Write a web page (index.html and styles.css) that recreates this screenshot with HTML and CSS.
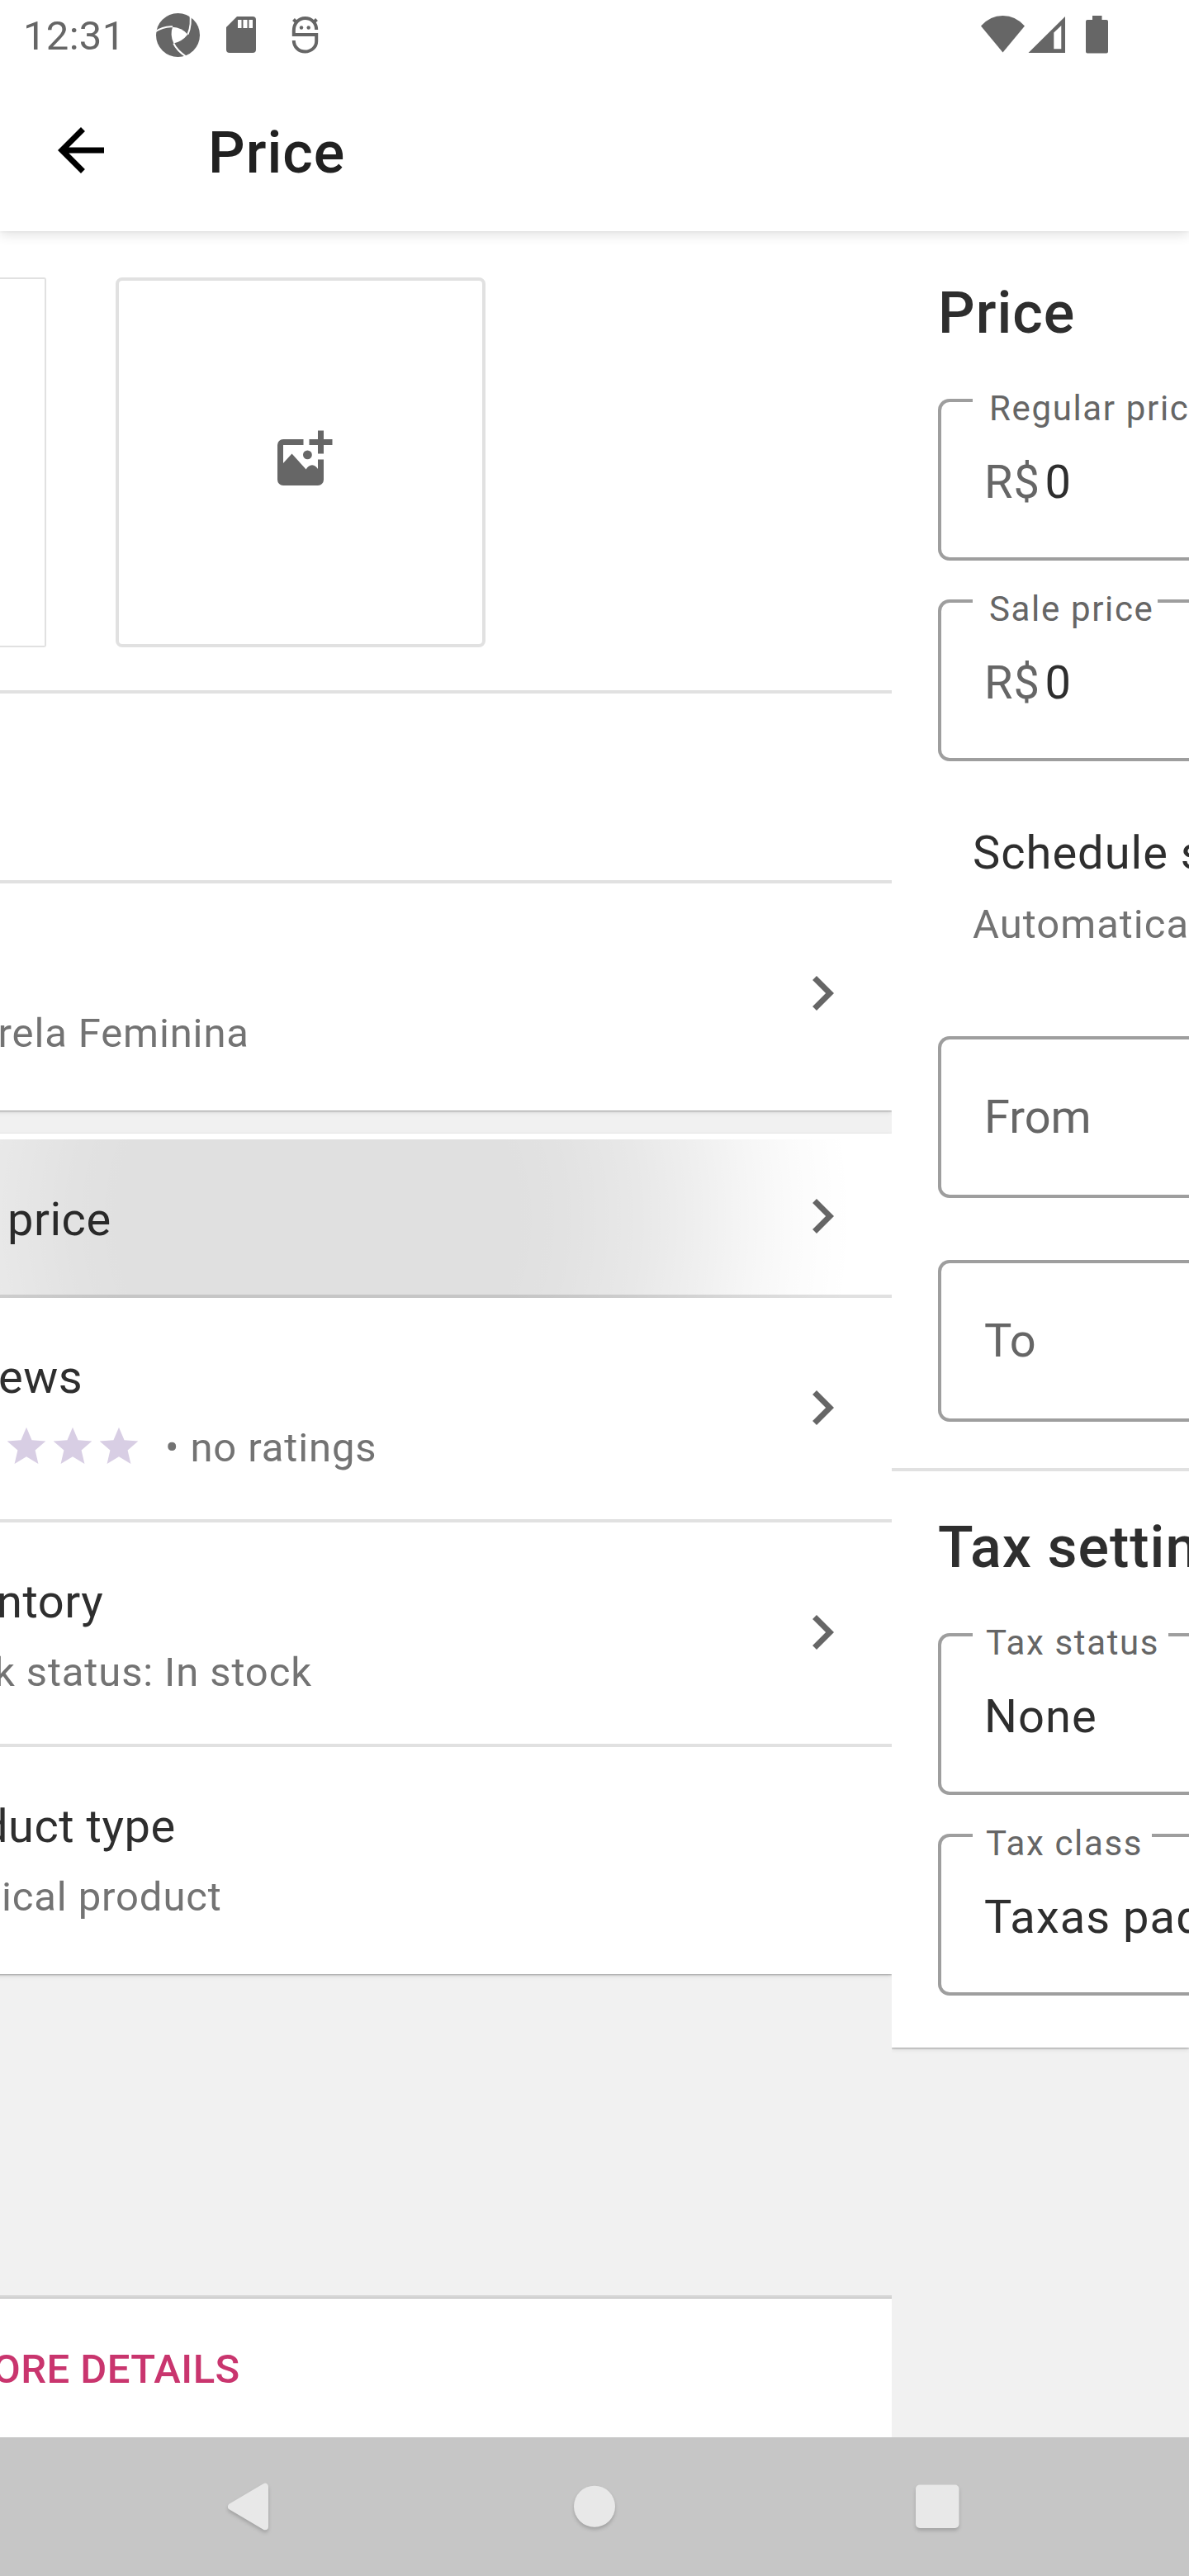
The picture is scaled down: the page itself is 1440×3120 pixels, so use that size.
FILE: index.html
```html
<!DOCTYPE html>
<html lang="en">
<head>
<meta charset="utf-8">
<title>Price</title>
<link rel="stylesheet" href="styles.css">
</head>
<body>
<svg class="defs" width="0" height="0">
  <symbol id="chevron" viewBox="0 0 24 24"><path d="M10 6 8.59 7.41 13.17 12l-4.58 4.59L10 18l6-6z"/></symbol>
  <symbol id="star" viewBox="0 0 24 24"><path d="M12 17.27 18.18 21l-1.64-7.03L22 9.24l-7.19-.61L12 2 9.19 8.63 2 9.24l5.46 4.73L5.82 21z"/></symbol>
</svg>
<div class="screen">
  <header class="top">
    <div class="status">
      <span class="clock">12:31</span>
      <svg class="status-left" viewBox="180 0 220 84">
        <circle cx="215.5" cy="42.5" r="26.5"/>
        <path class="cut" d="M209 32.7Q220 33 227.3 41.7Q221 50 210.3 52.5Q205.500 42 209 32.700z"/>
        <path class="cut-line" d="M187 39Q198 31.500 209 32.300M230 15Q232.500 30 227.500 41.700M210.300 52.500Q214 61 226 69"/>
        <path class="cut" d="M231 66Q237 61 240 62L244 72L228 72z"/>
        <path d="M287 20h19a4 4 0 0 1 4 4v36a4 4 0 0 1-4 4h-28a4 4 0 0 1-4-4V33z"/>
        <path class="cut" d="M288 24h4.500v10H288zM294.500 24h5v10h-5zM301.500 24h4.500v10h-4.500z"/>
        <path class="line" d="M383.200 36C383.200 27.500 377 22 369.500 22S355.800 28 355.800 37V42H383.200V50C383.200 57 377 62.500 369.500 62.500S355.800 57 355.800 49M355.500 23.500 359 27M383.500 23.500 380 27"/>
        <circle cx="365" cy="33.500" r="2.200"/><circle cx="373.700" cy="33.500" r="2.200"/>
      </svg>
      <svg class="status-right" viewBox="1180 0 170 84">
        <path d="M1188 31.500Q1199 19 1214.500 19T1241 31.500L1214.500 63.500z"/>
        <path fill-rule="evenodd" d="M1290 20V64H1245.500zM1285.300 31 1276.300 39.500V59.300H1285.300z"/>
        <path d="M1323 19h11.500v5H1340a2 2 0 0 1 2 2v36.500a2 2 0 0 1-2 2h-23a2 2 0 0 1-2-2V26a2 2 0 0 1 2-2h6z"/>
      </svg>
    </div>
    <div class="appbar">
      <svg class="back" viewBox="4 4 16 16"><path d="M20 11H7.830l5.590-5.590L12 4l-8 8 8 8 1.410-1.410L7.830 13H20z"/></svg>
      <h1>Price</h1>
    </div>
  </header>

  <main class="panes">
    <section class="pane product">
      <div class="card">
        <div class="gallery">
          <div class="photo"></div>
          <div class="add-photo">
            <svg viewBox="0 0 24 24"><path d="M13 4H6a2 2 0 0 0-2 2V18a2 2 0 0 0 2 2H18a2 2 0 0 0 2-2V11H18V14.300Q17.300 13 16 12.900Q14.700 13 13.900 14.400L9 9L6 12.300V6H13z" /><circle cx="14.400" cy="9.400" r="1.550"/><path d="M18 1h2v3h3v2h-3v3h-2V6h-3V4h3z"/></svg>
          </div>
        </div>
        <div class="name-row"></div>
        <div class="row category">
          <div class="texts"><p class="sub">rela Feminina</p></div>
          <svg class="chev"><use href="#chevron"/></svg>
        </div>
      </div>
      <div class="card details">
        <div class="row price">
          <div class="texts"><p class="title">price</p></div>
          <svg class="chev"><use href="#chevron"/></svg>
        </div>
        <div class="row reviews">
          <div class="texts">
            <p class="title">ews</p>
            <div class="rating">
              <svg><use href="#star"/></svg><svg><use href="#star"/></svg><svg><use href="#star"/></svg>
              <p class="sub">• no ratings</p>
            </div>
          </div>
          <svg class="chev"><use href="#chevron"/></svg>
        </div>
        <div class="row inventory">
          <div class="texts"><p class="title">ntory</p><p class="sub">k status: In stock</p></div>
          <svg class="chev"><use href="#chevron"/></svg>
        </div>
        <div class="row type">
          <div class="texts"><p class="title">duct type</p><p class="sub">ical product</p></div>
        </div>
      </div>
      <div class="more">ORE DETAILS</div>
    </section>

    <section class="pane pricing">
      <div class="card">
        <div class="group">
          <h2>Price</h2>
          <fieldset class="first"><legend><span>Regular pric</span></legend><p class="value"><span class="currency">R$</span>0</p></fieldset>
          <fieldset class="next sale"><legend><span>Sale price</span></legend><p class="value"><span class="currency">R$</span>0</p></fieldset>
          <div class="schedule"><p class="title">Schedule s</p><p class="sub">Automatica</p></div>
          <div class="date from">From</div>
          <div class="date to">To</div>
        </div>
        <div class="group tax">
          <h2>Tax settin</h2>
          <fieldset class="first tstatus"><legend><span>Tax status</span></legend><p class="value">None</p></fieldset>
          <fieldset class="next tclass"><legend><span>Tax class</span></legend><p class="value">Taxas pad</p></fieldset>
        </div>
      </div>
    </section>
  </main>

  <nav class="navbar">
    <svg viewBox="0 0 1440 168">
      <g class="keys">
        <path d="M280 84 321 59.700V108.300z" stroke-width="8" stroke-linejoin="round"/>
        <circle cx="720" cy="83.700" r="25"/>
        <rect x="1109" y="57.500" width="52.500" height="52.500" rx="5"/>
      </g>
    </svg>
  </nav>
</div>
</body>
</html>
```
FILE: styles.css
```css
* { box-sizing: border-box; }
body { margin: 0; background: #fff; font-family: Roboto, "Liberation Sans", sans-serif; }
p, h1, h2 { margin: 0; white-space: nowrap; }
.defs { display: block; position: absolute; }
.screen { width: 1440px; height: 3120px; display: flex; flex-direction: column; overflow: hidden; }

.top { height: 280px; flex: none; background: #fff; position: relative; z-index: 1; box-shadow: 0 4px 14px rgba(0,0,0,.12), 0 1px 3px rgba(0,0,0,.04); }
.status { height: 84px; display: flex; align-items: center; padding: 0 90px 0 28px; fill: #666; }
.clock { width: 152px; margin-top: 4px; font-size: 49px; line-height: 80px; letter-spacing: .3px; color: #666; }
.status-left { width: 220px; height: 84px; }
.status-right { width: 170px; height: 84px; margin-left: auto; }
.cut { fill: #fff; }
.cut-line { fill: none; stroke: #fff; stroke-width: 2; }
.line { fill: none; stroke: #666; stroke-width: 4; }
.appbar { height: 196px; display: flex; align-items: flex-start; padding-left: 70px; }
.back { width: 56px; height: 56px; margin-top: 70px; }
.appbar h1 { margin: 59px 0 0 126px; font-size: 70px; line-height: 84px; font-weight: 500; letter-spacing: 1px; color: #212121; }

.panes { flex: 1; display: flex; min-height: 0; }
.pane { background: #f1f1f1; overflow: hidden; display: flex; flex-direction: column; }
.product { width: 1080px; }
.pricing { width: 360px; }
.card { background: #fff; box-shadow: 0 1px 2px rgba(0,0,0,.3), 0 2px 6px rgba(0,0,0,.1); }
.product .card { margin-left: -20px; padding-left: 20px; }
.product .details { margin-top: 28px; padding-top: 7px; }

.gallery { height: 560px; padding-top: 56px; display: flex; gap: 84px; border-bottom: 4px solid #e1e1e1; }
.photo { width: 56px; height: 448px; border: 2px solid #e1e1e1; border-left: 0; border-radius: 0 3px 3px 0; }
.add-photo { width: 448px; height: 448px; border: 4px solid #e1e1e1; border-radius: 8px; display: flex; align-items: center; justify-content: center; }
.add-photo svg { width: 84px; height: 84px; fill: #666; }
.name-row { height: 230px; border-bottom: 4px solid #e1e1e1; }

.row { display: flex; justify-content: space-between; align-items: flex-start; height: 272px; padding: 58px 42px 0 0; border-bottom: 4px solid #e1e1e1; }
.title { font-size: 56px; line-height: 76px; letter-spacing: .525px; color: #2e2e2e; }
.sub { font-size: 49px; line-height: 66px; letter-spacing: .875px; color: #737373; }
.title + .sub, .rating { margin-top: 15px; }
.chev { width: 84px; height: 84px; fill: #666; margin-top: 33px; }
.category { height: 275px; padding-top: 149px; border: 0; }
.category .sub { margin-left: -2.500px; }
.category .chev { margin-top: -58px; }
.price { height: 192px; padding-top: 59px; position: relative; }
.price::after { content: ""; position: absolute; inset: 0 0 -4px 0; background: radial-gradient(circle at 385px 96px, rgba(0,0,0,.122) 245px, rgba(0,0,0,.115) 300px, rgba(0,0,0,.09) 390px, rgba(0,0,0,.06) 472px, rgba(0,0,0,.039) 517px, rgba(0,0,0,.016) 580px, transparent 648px); }
.price .title { margin-left: 9px; }
.price .chev { margin-top: -8px; }
.reviews .title { margin-left: -2px; }
.rating { display: flex; align-items: flex-start; padding-left: 4px; }
.rating svg { width: 56px; height: 56px; margin-top: 3px; fill: #d8cee4; }
.rating .sub { margin-left: 28px; }
.inventory .title { margin-left: -4px; }
.inventory .sub { margin-left: -7px; }
.type { height: 275px; border: 0; }
.type .title { margin-left: -22px; }
.type .sub { margin-left: 2px; }
.more { margin-top: auto; height: 172px; border-top: 3px solid #d6d6d6; box-shadow: inset 0 1px 0 #bdbdbd; background: #fff; font-size: 49px; line-height: 173px; font-weight: 500; letter-spacing: .45px; color: #c9356e; white-space: nowrap; text-indent: -9px; }

.group { padding-left: 56px; }
.group:first-child { padding-top: 57px; padding-bottom: 56px; }
.tax { border-top: 4px solid #e1e1e1; padding-top: 50px; padding-bottom: 63px; }
h2 { font-size: 70px; line-height: 84px; font-weight: 500; letter-spacing: 1px; color: #2e2e2e; }
fieldset, .date { height: 196px; margin: 0; min-width: 0; border: 4px solid #9e9e9e; border-right: 0; border-radius: 14px 0 0 14px; white-space: nowrap; }
fieldset { padding: 59px 0 0 38px; position: relative; }
legend { height: 4px; line-height: 4px; padding: 0 0 0 20px; font-size: 42px; letter-spacing: 1.650px; color: #666; width: 270px; }
legend span { position: relative; top: 9.500px; }
.sale legend { width: 224px; }
.tstatus legend { width: 237px; padding-left: 16px; }
.tclass legend { width: 217px; padding-left: 16px; }
.first, .tax .first { margin-top: 62px; }
.next { margin-top: 47px; }
.value { margin-left: 14px; font-size: 56px; line-height: 76px; letter-spacing: 1.050px; color: #2e2e2e; }
.currency { color: #666; margin-right: 5.500px; }
.schedule { padding: 73px 0 0 42px; }
.schedule .title { letter-spacing: 1px; }
.schedule .title + .sub { margin-top: 16px; letter-spacing: 1px; }
.date { padding: 56px 0 0 52px; font-size: 56px; line-height: 76px; color: #666; }
.from { margin-top: 102px; }
.to { margin-top: 75px; }

.navbar { height: 168px; flex: none; background: #c6c6c6; }
.navbar svg { display: block; width: 1440px; height: 168px; }
.keys { fill: #e8e8e8; filter: drop-shadow(0 3px 2px rgba(0,0,0,.18)); }
.keys path { stroke: #e8e8e8; }
```
